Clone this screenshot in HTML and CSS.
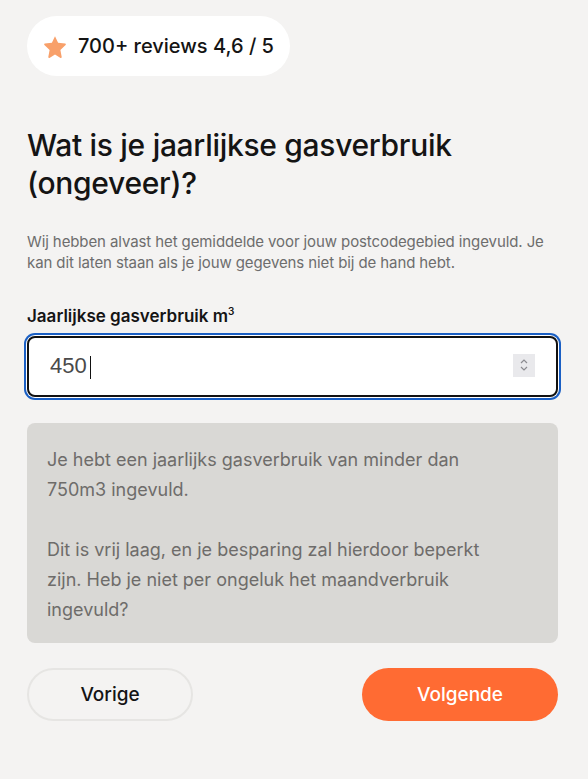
FILE: index.html
```html
<!DOCTYPE html>
<html lang="nl">

<head>
    <meta charset="UTF-8">
    <meta name="viewport" content="width=device-width, initial-scale=1.0">
    <title>Gasverbruik</title>
    <link rel="stylesheet" href="styles.css">
</head>

<body>

    <div class="page">
        <!-- Reviews badge -->
        <div class="reviews">
            <svg class="star" width="24" height="23" viewBox="0 0 24 23">
                <path d="M12 1.2l3.1 6.5 7 .9c.7.1 1 1 .5 1.5l-5.2 4.9 1.3 7c.1.7-.6 1.2-1.2.9L12 19.5l-5.5 3.4c-.6.3-1.3-.2-1.2-.9l1.3-7-5.2-4.9c-.5-.5-.2-1.4.5-1.5l7-.9L12 1.2z" fill="#f8a06a"/>
            </svg>
            <span>700+ reviews 4,6 / 5</span>
        </div>

        <h1 class="title">Wat is je jaarlijkse gasverbruik (ongeveer)?</h1>
        <p class="subtitle">Wij hebben alvast het gemiddelde voor jouw postcodegebied ingevuld. Je kan dit laten staan als je jouw gegevens niet bij de hand hebt.</p>

        <!-- Input -->
        <label class="field-label" for="gas">Jaarlijkse gasverbruik m<sup>3</sup></label>
        <div class="field">
            <input type="text" id="gas" value="450">
            <span class="caret"></span>
            <span class="spinner">
                <svg width="12" height="16" viewBox="0 0 12 16">
                    <path d="M3 6l3-3 3 3M3 10l3 3 3-3" fill="none" stroke="#8b8b90" stroke-width="1.2"/>
                </svg>
            </span>
        </div>

        <!-- Warning -->
        <div class="notice">
            <p>Je hebt een jaarlijks gasverbruik van minder dan 750m3 ingevuld.</p>
            <p>Dit is vrij laag, en je besparing zal hierdoor beperkt zijn. Heb je niet per ongeluk het maandverbruik ingevuld?</p>
        </div>

        <div class="actions">
            <button class="btn btn-prev">Vorige</button>
            <button class="btn btn-next">Volgende</button>
        </div>
    </div>

</body>

</html>
```

FILE: styles.css
```css
* {
    margin: 0;
    padding: 0;
    box-sizing: border-box;
}

body {
    background: #f4f3f2;
    font-family: 'Inter', sans-serif;
    color: #141414;
}

.page {
    width: 531px;
    margin-left: 27px;
    padding-top: 16px;
}

/* Reviews badge */
.reviews {
    display: inline-flex;
    align-items: center;
    height: 60px;
    padding: 0 16px;
    background: #fff;
    border-radius: 30px;
    font-size: 20px;
    font-weight: 500;
    white-space: nowrap;
}

.star {
    margin-right: 11px;
}

/* Heading */
.title {
    margin-top: 50px;
    width: 460px;
    font-size: 30px;
    font-weight: 500;
    line-height: 38px;
    letter-spacing: -0.3px;
}

.subtitle {
    margin-top: 29px;
    font-size: 15px;
    line-height: 21px;
    letter-spacing: -0.1px;
    color: #6d6d6d;
}

/* Field */
.field-label {
    display: block;
    margin-top: 28px;
    font-size: 17px;
    line-height: 20px;
    font-weight: 600;
}

.field-label sup {
    font-size: 10px;
}

.field {
    position: relative;
    margin-top: 10px;
    height: 61px;
    background: #fff;
    border: 2px solid #111;
    border-radius: 8px;
    box-shadow: 0 0 0 1px #fff, 0 0 0 3px #1a5fc4;
}

.field input {
    width: 100%;
    height: 100%;
    border: none;
    outline: none;
    background: transparent;
    padding-left: 21px;
    font-family: 'Liberation Sans', Arial, sans-serif;
    font-size: 22px;
    color: #4a4a4a;
}

.caret {
    position: absolute;
    left: 61px;
    top: 18px;
    width: 1px;
    height: 23px;
    background: #111;
}

.spinner {
    position: absolute;
    right: 21px;
    top: 16px;
    width: 22px;
    height: 23px;
    background: #e9e9ec;
    display: flex;
    align-items: center;
    justify-content: center;
}

/* Notice */
.notice {
    margin-top: 26px;
    background: #d9d8d5;
    border-radius: 8px;
    padding: 22px 50px 18px 20px;
    font-size: 18px;
    line-height: 30px;
    color: #6e6c6a;
}

.notice p + p {
    margin-top: 30px;
}

/* Buttons */
.actions {
    display: flex;
    justify-content: space-between;
    margin-top: 25px;
}

.btn {
    height: 53px;
    border-radius: 27px;
    font-family: 'Inter', sans-serif;
    font-size: 19px;
    font-weight: 500;
    cursor: pointer;
}

.btn-prev {
    width: 166px;
    background: #f4f3f2;
    border: 2px solid #e6e5e3;
    color: #141414;
}

.btn-next {
    width: 196px;
    background: #ff6b33;
    border: none;
    color: #fff;
}
```
